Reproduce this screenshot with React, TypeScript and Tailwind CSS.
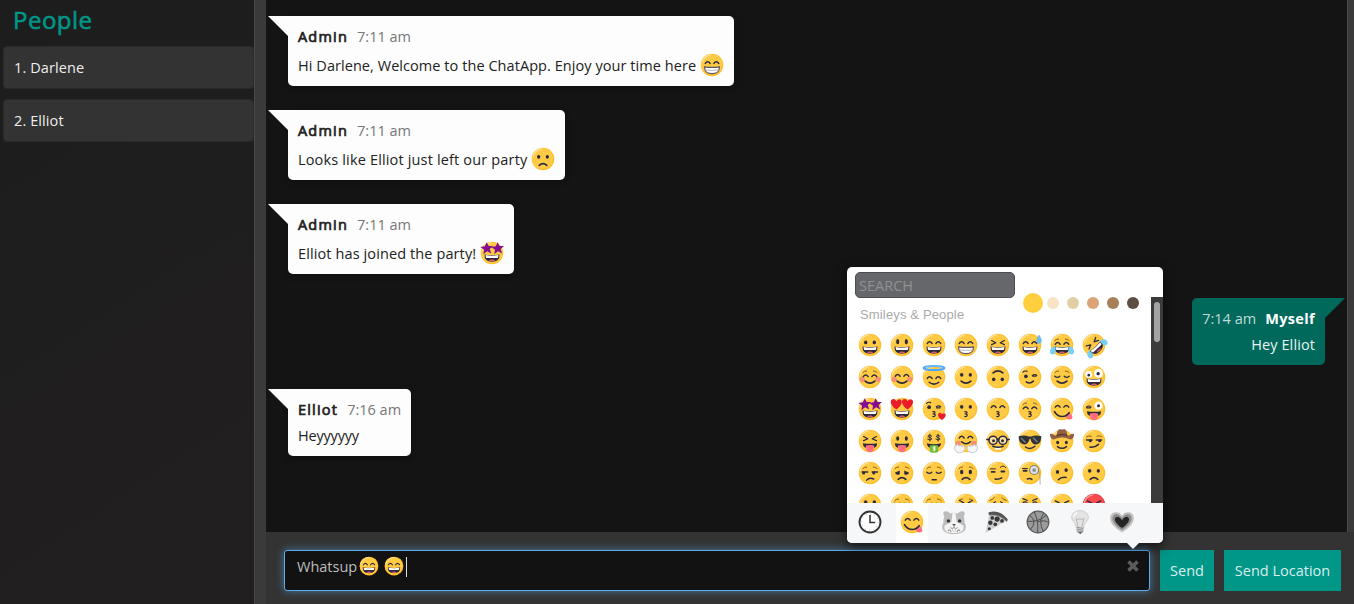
import React from "react";

const INK = "#2e2a3d";

type Kind = string;

const stroke = {
  fill: "none",
  stroke: INK,
  strokeWidth: 4,
  strokeLinecap: "round" as const,
  strokeLinejoin: "round" as const,
};

function L({ d, w = 4, c = INK }: { d: string; w?: number; c?: string }) {
  return <path d={d} {...stroke} strokeWidth={w} stroke={c} />;
}

function Dots({ y = 26, rx = 4.5, ry = 5 }: { y?: number; rx?: number; ry?: number }) {
  return (
    <g fill={INK}>
      <ellipse cx="20.5" cy={y} rx={rx} ry={ry} />
      <ellipse cx="43.5" cy={y} rx={rx} ry={ry} />
    </g>
  );
}

function Happy({ y = 28 }: { y?: number }) {
  return <L d={`M14 ${y}q6.500-9 13 0M37 ${y}q6.500-9 13 0`} w={3.8} />;
}

function Open() {
  return (
    <g>
      <path d="M12 36q20 4 40 0q1 19-20 19T12 36z" fill={INK} />
      <path d="M15 37.500q17 3 34 0q.5 6-2 7.500H17q-2.500-2-2-7.500z" fill="#fff" />
      <path d="M23 52q9-5 18 0q-9 4-18 0z" fill="#e8596e" />
    </g>
  );
}

function Teeth() {
  return (
    <g>
      <path d="M12 37q20 3 40 0q0 18-20 18T12 37z" fill="#fff" stroke="#5b5563" strokeWidth="3" />
      <path d="M14 45q18 3 36 0" fill="none" stroke="#a6a0a8" strokeWidth="2" />
    </g>
  );
}

function Tongue() {
  return (
    <g>
      <path d="M13 38q19 3 38 0q0 14-19 14T13 38z" fill={INK} />
      <path d="M21 44q11-3 22 0v8q-1 10-11 10t-11-10z" fill="#ff717f" />
      <path d="M32 46v8" stroke="#e2596c" strokeWidth="2" />
    </g>
  );
}

function Cheeks() {
  return (
    <g fill="#f5897b" opacity=".9">
      <circle cx="11" cy="38" r="7" />
      <circle cx="53" cy="38" r="7" />
    </g>
  );
}

const Squint = () => <L d="M15 20l11 6l-11 5M49 20l-11 6l11 5" w={3.6} />;
const Smile = () => <L d="M19 43q13 11 26 0" w={4.5} />;
const Frown = () => <L d="M22 49q10-9 20 0" w={4.5} />;
const Brows = () => <L d="M13 20q5-5 10-4M51 20q-5-5-10-4" w={2.6} c="#8a5a18" />;
const Kiss = () => <L d="M29 39q9 0 4 5q-2 1-3 1q8 1 4 6q-2 2-5 1" w={3.4} />;
const Closed = () => <L d="M13 30q7 6 13 0M38 30q6 6 13 0" w={3.8} />;

function Star({ x }: { x: number }) {
  return (
    <path
      transform={`translate(${x} 19)`}
      fill="#830e91"
      d="M1-16l5 10 12 0-9 8 4 12-11-6-10 8 2-12-10-7 12-2z"
    />
  );
}

function features(k: Kind): React.ReactNode {
  switch (k) {
    case "grinning":
      return <><Dots y={25} /><Open /></>;
    case "smiley":
      return <><Dots y={23} rx={4.2} ry={7} /><Open /></>;
    case "smile":
      return <><Happy /><Open /></>;
    case "grin":
      return <><Happy /><Teeth /></>;
    case "laughing":
      return <><Squint /><Open /></>;
    case "sweat":
      return <><Happy /><Open /><path d="M56 4q12 17 4 23q-9 3-11-5q-1-7 7-18z" fill="#67bdf0" /></>;
    case "joy":
      return (
        <>
          <Brows /><Happy y={30} /><Open />
          <path d="M14 35q-11 1-14 12q-1 10 8 10q10-1 6-22zM50 35q11 1 14 12q1 10-8 10q-10-1-6-22z" fill="#78cef5" />
        </>
      );
    case "rofl":
      return (
        <g transform="rotate(-42 32 32)">
          <Squint /><Open />
          <path d="M13 34q-13 1-14 12q1 10 9 8q8-3 5-20zM51 34q13 1 14 12q-1 10-9 8q-8-3-5-20z" fill="#78cef5" />
        </g>
      );
    case "relaxed":
      return <><Cheeks /><Brows /><Happy y={31} /><Smile /></>;
    case "blush":
      return <><Cheeks /><Happy y={30} /><Smile /></>;
    case "innocent":
      return (
        <>
          <Happy y={36} /><L d="M19 46q13 10 26 0" />
          <ellipse cx="32" cy="8" rx="28" ry="5.500" fill="none" stroke="#4aa9ff" strokeWidth="5.500" />
          <path d="M10 5q20-7 40 0" fill="none" stroke="#8acaff" strokeWidth="2" />
        </>
      );
    case "slight":
      return <><Dots /><Smile /></>;
    case "upside":
      return <g transform="rotate(180 32 32)"><Dots /><Smile /></g>;
    case "wink":
      return <><ellipse cx="21" cy="30" rx="5" ry="5" fill={INK} /><L d="M13 19q5-5 11-2M39 30h9M38 28q7-5 12 0" w={3} /><L d="M22 45q10 7 19-2" /></>;
    case "relieved":
      return <><Brows /><Closed /><Smile /></>;
    case "zany":
      return (
        <>
          <circle cx="18" cy="25" r="9" fill="#fff" /><circle cx="44" cy="22" r="12" fill="#fff" />
          <circle cx="18" cy="27" r="3.500" fill={INK} /><circle cx="43" cy="23" r="4.500" fill={INK} />
          <Open />
        </>
      );
    case "starstruck":
      return <><Star x={17} /><Star x={46} /><Open /></>;
    case "hearts":
      return (
        <>
          <Open />
          <path d="M17 33C-3 20 0 5 9 5q6 0 8 6q5-8 12-4c7 7-2 19-12 26zM47 33C27 20 30 5 39 5q5 0 8 6q5-8 12-4c7 7-2 19-12 26z" fill="#eb1c2a" />
        </>
      );
    case "kissheart":
      return (
        <>
          <circle cx="19" cy="27" r="5" fill={INK} /><L d="M12 17q5-5 11-2M38 26q7-5 12 0M39 29h9" w={3} /><Kiss />
          <path d="M53 61q-12-8-10-16q5-6 10 1q6-6 10 0q2 7-10 15z" fill="#ec1c29" />
        </>
      );
    case "kissing":
      return <><Dots /><Kiss /></>;
    case "kisssmile":
      return <><Happy /><Kiss /></>;
    case "kissclosed":
      return <><Brows /><Happy y={31} /><Kiss /></>;
    case "yum":
      return (
        <>
          <Happy y={27} /><path d="M41 49q6-9 16-3l3 8q-1 7-9 6t-10-11z" fill="#ff717f" />
          <L d="M12 39q7 13 21 13q11 0 18-10" w={4.500} />
        </>
      );
    case "winktongue":
      return <><L d="M12 27q6-6 12 0M13 29h9" w={3} /><circle cx="44" cy="23" r="11" fill="#fff" /><circle cx="44" cy="23" r="4" fill={INK} /><Tongue /></>;
    case "squinttongue":
      return <><Squint /><Tongue /></>;
    case "tongue":
      return <><Dots y={25} rx={4} ry={6} /><Tongue /></>;
    case "money":
      return (
        <>
          <L d="M26 19q-8-5-10 0q0 3 5 4t5 4q-3 5-11 0M21 14v18M48 19q-8-5-10 0q0 3 5 4t5 4q-3 5-11 0M43 14v18" w={2.6} />
          <path d="M13 38q19 5 38 0q0 12-19 13T13 38z" fill={INK} />
          <path d="M21 43h22v18q-11 5-22 0z" fill="#71bb3b" />
          <L d="M36 48h-6v4h5v4h-6M33 46v13" w={2} c="#fff" />
        </>
      );
    case "hug":
      return (
        <>
          <Cheeks /><Happy y={24} /><L d="M20 34q12 11 24 0" />
          <path d="M3 43q-4 10 2 17q9 7 19 1q8-7 4-15q-3-6-6 2q-3-8-8-3q-6-7-8 0zM61 43q4 10-2 17q-9 7-19 1q-8-7-4-15q3-6 6 2q3-8 8-3q6-7 8 0z" fill="#f4f6f8" stroke="#b9c0c5" strokeWidth="2" />
        </>
      );
    case "nerd":
      return (
        <>
          <circle cx="19" cy="30" r="11" fill="#fae2a0" stroke={INK} strokeWidth="4" />
          <circle cx="45" cy="30" r="11" fill="#fae2a0" stroke={INK} strokeWidth="4" />
          <path d="M30 28q2-3 4 0M8 28H2M56 28h6" {...stroke} />
          <circle cx="20" cy="31" r="4" fill={INK} /><circle cx="44" cy="31" r="4" fill={INK} />
          <path d="M24 47h16v8H24z" fill="#fff" /><L d="M18 46q14 5 28 0" />
        </>
      );
    case "cool":
      return (
        <>
          <path d="M2 19q15-4 27 1h6q12-5 27-1v5q-2 18-16 17q-10-1-13-15h-2q-3 14-13 15Q4 41 2 24z" fill="#303238" />
          <path d="M8 24l12 12M40 23l12 12" stroke="#747980" strokeWidth="4" />
          <L d="M20 48q13 9 25-2" />
        </>
      );
    case "cowboy":
      return (
        <>
          <Dots y={36} rx={4} ry={4.5} /><L d="M20 47q12 9 24 0" />
          <path d="M0 13q6-2 11 3q3 3 7-1q1-13 8-15q6 3 12 0q7 3 8 15q4 4 7 1q5-5 11-3q1 13-10 15Q32 17 10 28Q-1 26 0 13z" fill="#916147" />
          <path d="M18 18q14-7 28 0" stroke="#5d3c2d" strokeWidth="4" fill="none" />
        </>
      );
    case "smirk":
      return <><L d="M12 21q6-4 13-2M40 19q6-3 12 1" w={2.6} c="#8a5a18" /><L d="M12 29h15M38 29h14" /><circle cx="22" cy="31" r="4" fill={INK} /><circle cx="47" cy="31" r="4" fill={INK} /><L d="M21 48q14 2 23-7" /></>;
    case "unamused":
      return <><Brows /><L d="M11 29h15M38 29h14" /><circle cx="15" cy="32" r="4" fill={INK} /><circle cx="42" cy="32" r="4" fill={INK} /><L d="M23 51q7-8 19-3" /></>;
    case "disappointed":
      return <><Brows /><path d="M13 31l13-6v10q-9 4-13-4zM51 31l-13-6v10q9 4 13-4z" fill={INK} /><Frown /></>;
    case "pensive":
      return <><Brows /><Closed /><L d="M27 50h11" /></>;
    case "worried":
      return <><Brows /><Dots y={29} rx={4.5} ry={6} /><Frown /></>;
    case "brow":
      return <><L d="M11 21l14 0M38 17q8-8 15 1" w={2.600} /><L d="M15 29h8M41 28h8" w={5} /><L d="M24 48q9 2 18-3" /></>;
    case "monocle":
      return (
        <>
          <L d="M12 20h13" w={2.600} /><L d="M15 26h8" w={5} /><L d="M25 48q8-3 12 1" />
          <circle cx="43" cy="24" r="12" fill="#dce2e3" stroke="#817b75" strokeWidth="3" />
          <circle cx="43" cy="24" r="5" fill="#8b918f" /><L d="M56 28q3 8 3 34" w={2} c="#9b9890" />
        </>
      );
    case "confused":
      return <><ellipse cx="20" cy="29" rx="4.500" ry="5" fill={INK} /><ellipse cx="43" cy="24" rx="4.500" ry="5" fill={INK} /><L d="M22 50q8-8 21-6" /></>;
    case "frown":
      return <><Dots /><Frown /></>;
    case "bigfrown":
      return <><Dots y={24} /><Frown /></>;
    case "persevere":
      return <><Brows /><Squint /></>;
    case "weary":
      return <><L d="M10 20q7-1 12-8M54 20q-7-1-12-8" w={2.4} c="#6e4818" /><L d="M12 29q8 0 13-6M52 29q-8 0-13-6" w={3} /></>;
    case "triumph":
      return <><L d="M13 15l12 5M51 15l-12 5M14 25q6-3 10 0M40 25q6-3 10 0" w={3} /></>;
    case "angry":
      return <><L d="M14 21l11 5M50 21l-11 5" w={3.500} /><Dots y={30} /></>;
    default:
      return <><Brows /><L d="M13 27q7 4 13 0M38 27q6 4 13 0" w={3} /></>;
  }
}

function Emoji({ kind, size = 24 }: { kind: Kind; size?: number }) {
  const fill = kind === "rage" ? "#fb4b4e" : "#ffcb45";
  const edge = kind === "rage" ? "#e63d43" : "#ffbf28";
  return (
    <svg width={size} height={size} viewBox="0 0 64 64" className="block shrink-0 overflow-visible">
      <circle cx="32" cy="32" r="30" fill={edge} />
      <circle cx="30.500" cy="31" r="28" fill={fill} />
      <path d="M6 25Q12 7 29 5" fill="none" stroke="#fff" strokeOpacity=".45" strokeWidth="3" strokeLinecap="round" />
      {features(kind === "rage" ? "angry" : kind)}
    </svg>
  );
}

const GRID: Kind[] = [
  "grinning", "smiley", "smile", "grin", "laughing", "sweat", "joy", "rofl",
  "relaxed", "blush", "innocent", "slight", "upside", "wink", "relieved", "zany",
  "starstruck", "hearts", "kissheart", "kissing", "kisssmile", "kissclosed", "yum", "winktongue",
  "squinttongue", "tongue", "money", "hug", "nerd", "cool", "cowboy", "smirk",
  "unamused", "disappointed", "pensive", "worried", "brow", "monocle", "confused", "frown",
  "bigfrown", "tired", "tired", "persevere", "weary", "triumph", "angry", "rage",
];

interface BubbleProps {
  name: string;
  time: string;
  text: string;
  emoji?: Kind;
  tracking?: string;
}

function Bubble({ name, time, text, emoji, tracking = "" }: BubbleProps) {
  return (
    <div className={`relative ml-[22px] w-fit rounded-b-[5px] rounded-tr-[5px] bg-[#fdfdfd] px-[10px] pt-[10px] text-[#222] shadow-[0_2px_6px_rgba(0,0,0,0.3)] ${emoji ? "h-[70px]" : "h-[67px]"}`}>
      <svg width="20" height="20" className="absolute top-0 -left-5"><path d="M0 0H20V20z" fill="#fdfdfd" /></svg>
      <div className="flex h-[22px] items-center gap-[9px]">
        <span className="tracking-[1.2px] [-webkit-text-stroke:0.7px_currentColor]">{name}</span>
        <span className="text-[#777]">{time}</span>
      </div>
      <div className={`flex items-center gap-1 ${emoji ? "mt-[5px] h-[25px]" : "mt-1 h-[22px]"}`}>
        <span className={tracking}>{text}</span>
        {emoji && <div className="pb-[2px]"><Emoji kind={emoji} /></div>}
      </div>
    </div>
  );
}

function Tab({ active, children }: { active?: boolean; children: React.ReactNode }) {
  return (
    <div className={`flex h-10 w-8 shrink-0 items-center justify-center pb-[2px] ${active ? "bg-white" : ""}`}>
      {children}
    </div>
  );
}

const svgTab = { width: 24, height: 24, viewBox: "0 0 64 64" };

function Picker() {
  return (
    <div className="absolute right-[-14px] bottom-[47px] h-[276px] w-[316px] rounded-[5px] bg-white shadow-[0_4px_12px_rgba(0,0,0,0.6)]">
      <div className="flex h-[30px] pt-[5px] pl-2">
        <div className="flex h-[26px] w-[160px] shrink-0 items-center rounded-[5px] border border-[#4c4d50] bg-[#66676b] pt-[2px] pl-[3px] text-[14.5px] text-[#909193]">
          SEARCH
        </div>
      </div>
      <div className="absolute top-[26px] left-[176px] flex items-center">
        <span className="size-5 rounded-full bg-[#ffcf3e]" />
        <span className="ml-1 size-3 rounded-full bg-[#fae3c5]" />
        <span className="ml-2 size-3 rounded-full bg-[#e2cfa5]" />
        <span className="ml-2 size-3 rounded-full bg-[#daa478]" />
        <span className="ml-2 size-3 rounded-full bg-[#a78058]" />
        <span className="ml-2 size-3 rounded-full bg-[#5e4d43]" />
      </div>
      <div className="flex h-[206px] overflow-hidden">
        <div className="w-[304px]">
          <div className="flex h-8 items-center pt-1 pb-px pl-[13px] font-['Liberation_Sans',sans-serif] text-[13px] tracking-[0.15px] text-[#aaa]">
            Smileys &amp; People
          </div>
          <div className="grid w-fit grid-cols-8 pl-[7px]">
            {GRID.map((k, i) => (
              <div key={i} className="flex size-8 items-center justify-center">
                <Emoji kind={k} />
              </div>
            ))}
          </div>
        </div>
        <div className="w-3 bg-[#3b3b3b] pt-[5px] pl-[3px]">
          <div className="h-10 w-[6px] rounded-full bg-[#a3a3a3]" />
        </div>
      </div>
      <div className="flex h-10 gap-[10px] rounded-b-[5px] bg-[#f5f7f9] pl-[7px]">
        <Tab>
          <svg {...svgTab}>
            <circle cx="32" cy="32" r="28" fill="#fff" stroke="#333" strokeWidth="5" />
            <circle cx="32" cy="32" r="22" fill="none" stroke="#888" strokeWidth="2" strokeDasharray="2 9.500" />
            <path d="M32 13v20h14" fill="none" stroke="#333" strokeWidth="4" />
          </svg>
        </Tab>
        <Tab active><Emoji kind="yum" /></Tab>
        <Tab>
          <svg {...svgTab}>
            <path d="M6 17Q-1 3 10 3q8 0 12 6q10-4 20 0q4-6 12-6q11 0 4 14q3 9 2 17q7 12 0 21q-9 9-28 9T4 55q-7-9 0-21q-1-8 2-17z" fill="#bcbcbc" />
            <path d="M28 8h8l3 24l18 9q5 20-25 20T7 41l18-9z" fill="#f4f4f4" />
            <circle cx="17" cy="29" r="4.500" fill="#333" /><circle cx="47" cy="29" r="4.500" fill="#333" />
            <path d="M27 37h10l-5 6z" fill="#555" /><path d="M32 42v5m-10 0q5 5 10 0q5 5 10 0" fill="none" stroke="#777" strokeWidth="2" />
            <path d="M28 49h8v7h-8z" fill="#fff" stroke="#999" />
            <path d="M16 56q5-7 8 3M40 59q3-10 8-3" fill="none" stroke="#999" strokeWidth="3" />
          </svg>
        </Tab>
        <Tab>
          <svg {...svgTab}>
            <path d="M14 12L4 61L61 27Q40 6 14 12z" fill="#d0d0d0" />
            <path d="M13 6Q41-2 62 23q3 4-2 8Q40 11 15 14q-5-4-2-8z" fill="#555" />
            <path d="M15 14Q41 11 60 31" fill="none" stroke="#999" strokeWidth="2" />
            <g fill="#383838"><circle cx="22" cy="21" r="5" /><circle cx="35" cy="24" r="7" /><circle cx="17" cy="34" r="6" /><circle cx="30" cy="38" r="5" /><circle cx="48" cy="29" r="5" /><circle cx="14" cy="50" r="4" /></g>
          </svg>
        </Tab>
        <Tab>
          <svg {...svgTab}>
            <circle cx="32" cy="32" r="29" fill="#9b9b9b" stroke="#5a5a5a" strokeWidth="3" />
            <path d="M22 5Q34 28 31 61M3 30Q33 34 55 13M47 8Q32 30 46 57M10 14Q31 30 12 52M31 31Q48 25 61 33" fill="none" stroke="#4c4c4c" strokeWidth="2.600" />
          </svg>
        </Tab>
        <Tab>
          <svg {...svgTab}>
            <path d="M22 47Q20 36 14 30Q5 19 14 8Q32-6 50 8Q59 19 50 30Q43 37 42 47z" fill="#e3e3e3" stroke="#c8c8c8" strokeWidth="2" />
            <path d="M27 46l-5-23q5 5 10 0q5 5 10 0l-5 23" fill="none" stroke="#aaa" strokeWidth="2" />
            <path d="M23 45h18v13q-9 9-18 0z" fill="#999" /><path d="M23 50l18-3M23 56l18-3" stroke="#ddd" strokeWidth="2" />
            <path d="M28 60h9l-4 4z" fill="#444" />
            <path d="M15 18q2-9 10-11" fill="none" stroke="#fff" strokeWidth="3" />
          </svg>
        </Tab>
        <Tab>
          <svg {...svgTab}>
            <path d="M32 60Q0 40 0 21Q2 5 17 6q10 0 15 9q5-9 15-9q15-1 17 15q0 19-32 39z" fill="#c2c2c2" />
            <path d="M32 54Q6 37 6 22q3-12 13-11q8 1 13 10q5-9 13-10q10-1 13 11q0 15-26 32z" fill="#8c8c8c" />
            <path d="M32 48Q12 34 13 23q4-8 11-4q5 2 8 8q3-6 8-8q7-4 11 4q1 11-19 25z" fill="#252525" />
          </svg>
        </Tab>
      </div>
      <svg width="12" height="6" className="absolute top-full right-6"><path d="M0 0h12L6 6z" fill="#f5f7f9" /></svg>
    </div>
  );
}

export default function App() {
  return (
    <div className="flex h-[604px] w-[1354px] overflow-hidden bg-[#333] font-['Open_Sans',sans-serif] text-[14.5px] leading-[22px]">
      <aside className="w-[254px] shrink-0 bg-[linear-gradient(147deg,#1d1d1d,#221f20)] pl-[3px]">
        <h1 className="h-[46px] pl-[10px] text-[24px] leading-[40px] tracking-[0.5px] text-[#009688] [-webkit-text-stroke:0.6px_currentColor]">People</h1>
        <ol className="flex flex-col gap-[10px] tracking-[0.1px]">
          <li className="flex h-[43px] items-center rounded-[4px] border border-[#2a2a2a] bg-[#333] pl-[10px] text-[#eee]">1. Darlene</li>
          <li className="flex h-[43px] items-center rounded-[4px] border border-[#2a2a2a] bg-[#333] pl-[10px] text-[#eee]">2. Elliot</li>
        </ol>
      </aside>
      <div className="w-3 shrink-0 border-l border-[#4a4a4a] bg-[#3a3a3a]" />
      <main className="flex min-w-0 flex-1 flex-col">
        <div className="flex h-[532px] shrink-0">
          <section className="flex w-[1081px] flex-col gap-6 bg-[#141414] pt-4">
            <Bubble name="Admin" time="7:11 am" text="Hi Darlene, Welcome to the ChatApp. Enjoy your time here" emoji="grin" tracking="tracking-[0.06px]" />
            <Bubble name="Admin" time="7:11 am" text="Looks like Elliot just left our party" emoji="frown" tracking="tracking-[0.16px]" />
            <Bubble name="Admin" time="7:11 am" text="Elliot has joined the party!" emoji="starstruck" tracking="tracking-[0.11px]" />
            <div className="relative mr-[22px] h-[67px] w-fit self-end rounded-b-[5px] rounded-tl-[5px] bg-[#00695c] px-[10px] pt-[10px] text-right text-[#e8f3f1]">
              <svg width="20" height="20" className="absolute top-0 -right-5"><path d="M0 0H20L0 20z" fill="#00695c" /></svg>
              <div className="flex h-[22px] items-center gap-[9px]">
                <span className="text-[#bfdad6]">7:14 am</span>
                <span className="font-bold tracking-[0.35px] text-white">Myself</span>
              </div>
              <div className="mt-1 h-[22px] tracking-[0.1px]">Hey Elliot</div>
            </div>
            <Bubble name="Elliot" time="7:16 am" text="Heyyyyyy" tracking="tracking-[-0.2px]" />
          </section>
          <div className="flex-1 border-l border-[#4a4a4a] bg-[#3a3a3a]" />
        </div>
        <form className="flex h-[72px] gap-[10px] pt-[18px] pl-[18px]">
          <div className="relative flex h-[41px] w-[866px] shrink-0 rounded-[3px] border border-[#5faaea] bg-[#121212] pl-3 text-[#bdbdbd] shadow-[0_0_8px_rgba(82,168,236,0.6)]">
            <span className="mt-[5px]">Whatsup</span>
            <div className="mt-[5px] ml-[2px] flex gap-[5px]">
              <Emoji kind="smile" size={20} />
              <Emoji kind="smile" size={20} />
            </div>
            <span className="mt-[6px] ml-[2px] h-5 w-px bg-[#ddd]" />
            <svg width="12" height="12" viewBox="0 0 12 12" className="absolute top-[9px] right-[10px]">
              <path d="M1.500 1.500l9 9M10.500 1.500l-9 9" stroke="#5c5c5c" strokeWidth="3.600" />
            </svg>
            <Picker />
          </div>
          <button type="button" className="h-[41px] w-[54px] shrink-0 bg-[#009688] text-[#d8efed]">Send</button>
          <button type="button" className="h-[41px] w-[117px] shrink-0 bg-[#009688] text-[#d8efed]">Send Location</button>
        </form>
      </main>
    </div>
  );
}
